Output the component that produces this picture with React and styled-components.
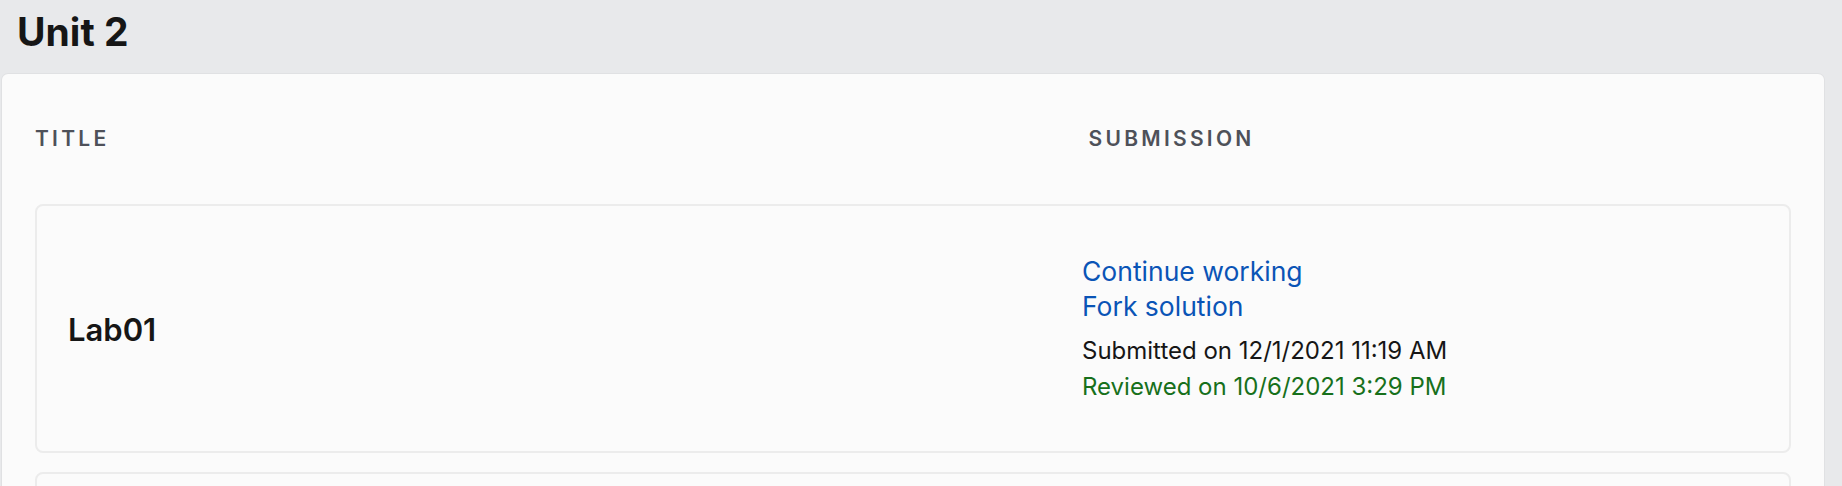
import React from "react";
import styled, { createGlobalStyle } from "styled-components";

const Global = createGlobalStyle`
  html, body { margin: 0; padding: 0; background: #e8e9eb; }
  body { font-family: Inter, "Noto Sans", Arial, sans-serif; color: #161616; }
  * { box-sizing: border-box; }
`;

const Page = styled.div`
  display: flex;
  flex-direction: column;
  padding: 0 18px 0 2px;
  min-height: 486px;
`;

const UnitTitle = styled.h2`
  margin: 0 0 18px 0;
  padding: 8px 0 0 15px;
  font-family: Inter, Roboto, sans-serif;
  font-weight: 700;
  font-size: 39px;
  line-height: 48px;
  color: #161616;
`;

const Panel = styled.section`
  flex: 1;
  background: #fbfbfb;
  border-radius: 6px;
  box-shadow: 0 0 0 1px rgba(0, 0, 0, 0.03);
  padding: 0 33px 40px;
  display: flex;
  flex-direction: column;
  gap: 19px;
`;

const HeaderRow = styled.div`
  display: grid;
  grid-template-columns: 60% 40%;
  align-items: center;
  height: 130px;
  margin-bottom: -19px;
`;

const HeaderCell = styled.div`
  font-family: Inter, Roboto, sans-serif;
  font-weight: 600;
  font-size: 21px;
  line-height: 24px;
  letter-spacing: 0.155em;
  text-transform: uppercase;
  color: #4e5159;
`;

const Card = styled.div`
  display: grid;
  grid-template-columns: 60% 40%;
  align-items: center;
  border: 2px solid #ececec;
  border-radius: 8px;
  padding: 48px 31px 46px;
  background: #fbfbfb;
`;

const RowTitle = styled.div`
  font-family: Inter, Roboto, sans-serif;
  font-weight: 600;
  font-size: 31px;
  line-height: 38px;
  color: #161616;
`;

const SubmissionCol = styled.div`
  display: flex;
  flex-direction: column;
`;

const LinkText = styled.a`
  font-family: Inter, Roboto, sans-serif;
  font-size: 26.5px;
  line-height: 35px;
  color: #0a54b6;
  text-decoration: none;
  cursor: pointer;
`;

const Meta = styled.div`
  font-family: Inter, Roboto, sans-serif;
  font-size: 24px;
  line-height: 36px;
  color: ${(p) => (p.$tone === "green" ? "#17701b" : "#161616")};
  margin-top: ${(p) => (p.$first ? "9px" : "0")};
`;

const rows = [
  {
    title: "Lab01",
    links: ["Continue working", "Fork solution"],
    submitted: "Submitted on 12/1/2021 11:19 AM",
    reviewed: "Reviewed on 10/6/2021 3:29 PM",
  },
  {
    title: "Lab02",
    links: ["Continue working", "Fork solution"],
    submitted: "Submitted on 12/8/2021 10:02 AM",
    reviewed: null,
  },
];

export default function App() {
  return (
    <>
      <Global />
      <Page>
        <UnitTitle>Unit 2</UnitTitle>
        <Panel>
          <HeaderRow>
            <HeaderCell>Title</HeaderCell>
            <HeaderCell>Submission</HeaderCell>
          </HeaderRow>
          {rows.map((r) => (
            <Card key={r.title}>
              <RowTitle>{r.title}</RowTitle>
              <SubmissionCol>
                {r.links.map((l) => (
                  <LinkText key={l}>{l}</LinkText>
                ))}
                <Meta $first>{r.submitted}</Meta>
                {r.reviewed && <Meta $tone="green">{r.reviewed}</Meta>}
              </SubmissionCol>
            </Card>
          ))}
        </Panel>
      </Page>
    </>
  );
}
